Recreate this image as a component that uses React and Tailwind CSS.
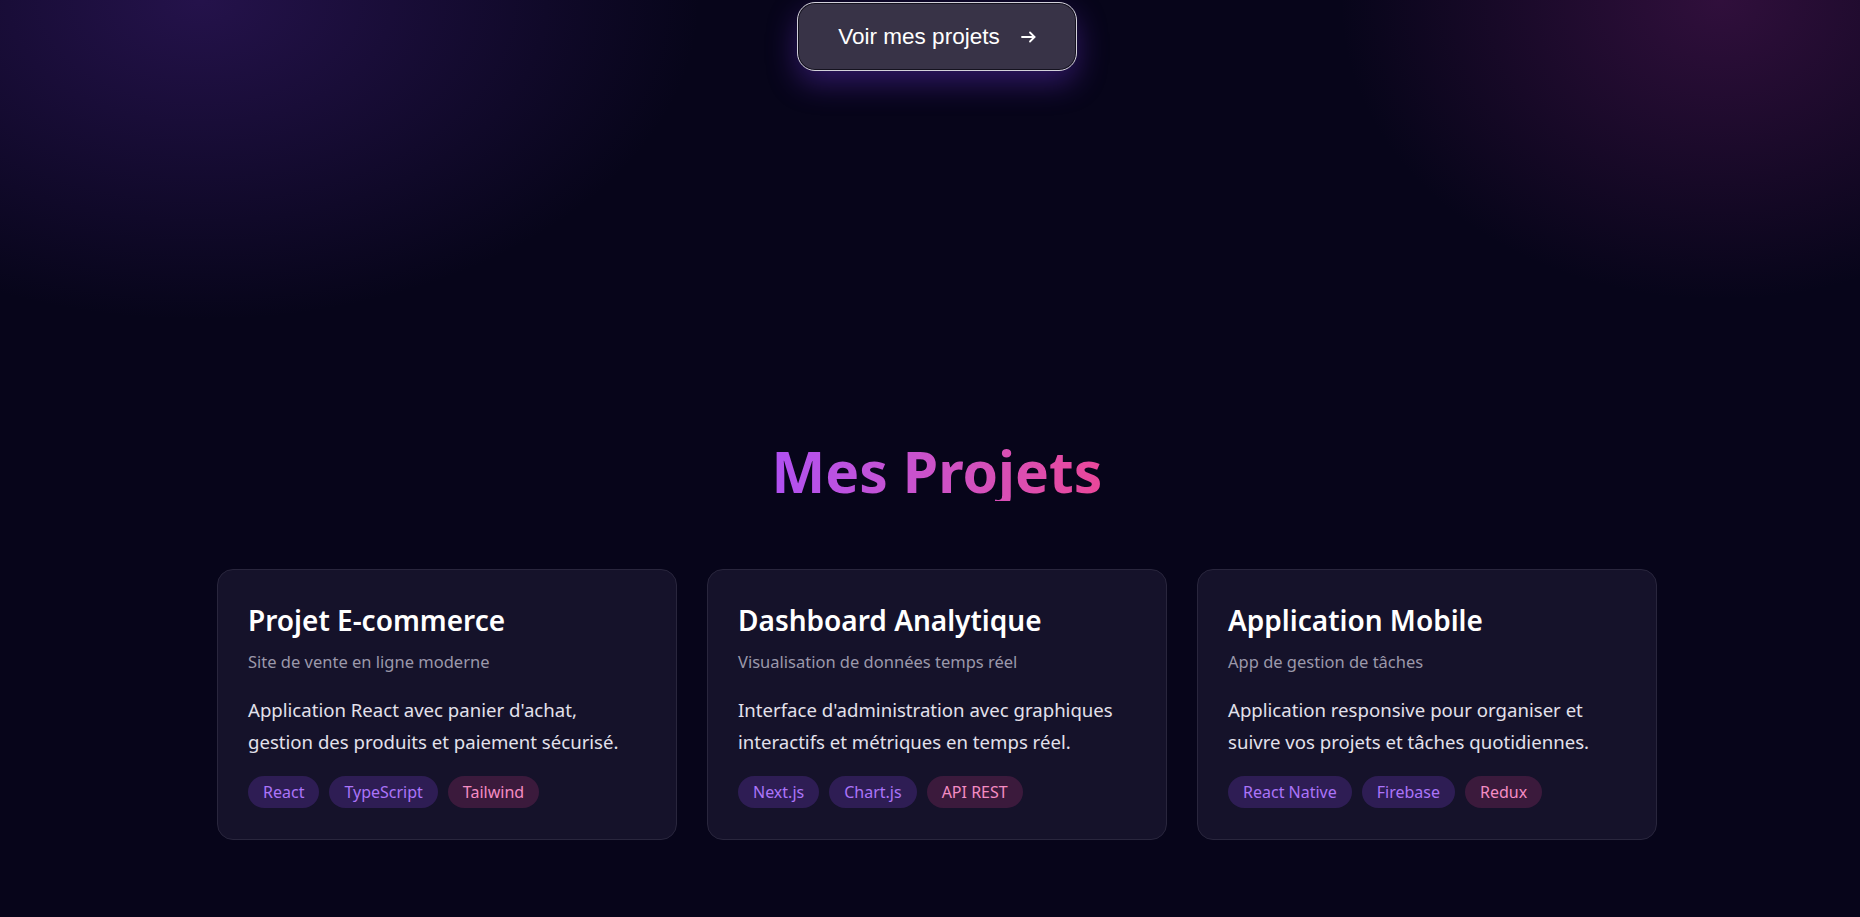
import React from 'react';

const projects = [
  {
    title: 'Projet E-commerce',
    subtitle: 'Site de vente en ligne moderne',
    description: "Application React avec panier d'achat, gestion des produits et paiement sécurisé.",
    tags: ['React', 'TypeScript', 'Tailwind'],
  },
  {
    title: 'Dashboard Analytique',
    subtitle: 'Visualisation de données temps réel',
    description: "Interface d'administration avec graphiques interactifs et métriques en temps réel.",
    tags: ['Next.js', 'Chart.js', 'API REST'],
  },
  {
    title: 'Application Mobile',
    subtitle: 'App de gestion de tâches',
    description: 'Application responsive pour organiser et suivre vos projets et tâches quotidiennes.',
    tags: ['React Native', 'Firebase', 'Redux'],
  },
];

// les deux premiers tags en violet, le dernier en rose
const tagStyles = [
  'bg-[#2e1d54] text-[#ab74f9]',
  'bg-[#2e1d54] text-[#ab74f9]',
  'bg-[#3b1a3c] text-[#f48cc3]',
];

function ProjectCard({ project }) {
  return (
    <div className="bg-[#15122a] border border-[#29263d] rounded-2xl pt-8 px-[30px] pb-[31px]">
      <h3 className="text-[28px] leading-9 font-semibold text-white">{project.title}</h3>
      <p className="mt-3 text-[16.5px] leading-6 text-[#9b98aa]">{project.subtitle}</p>
      <p className="mt-5 text-[18.6px] leading-8 text-[#e3e1ec] pr-4">{project.description}</p>
      <div className="mt-[18px] flex gap-[10px]">
        {project.tags.map((tag, i) => (
          <span key={tag} className={`h-8 px-[15px] rounded-full flex items-center text-base ${tagStyles[i]}`}>
            {tag}
          </span>
        ))}
      </div>
    </div>
  );
}

function Arrow() {
  return (
    <svg width="15" height="12" viewBox="0 0 15 12" fill="none" stroke="currentColor" strokeWidth="1.8" strokeLinecap="round" strokeLinejoin="round">
      <path d="M1 6h12.5" />
      <path d="M9 1.5 13.5 6 9 10.5" />
    </svg>
  );
}

export default function App() {
  return (
    <div
      className="min-h-screen pl-[14px] bg-[#07051a] bg-[radial-gradient(ellipse_500px_320px_at_200px_0px,rgba(72,34,134,0.45),transparent),radial-gradient(ellipse_380px_300px_at_1720px_0px,rgba(110,30,110,0.4),transparent)] font-['Noto_Sans',sans-serif] overflow-hidden"
    >
      {/* Hero (bas) */}
      <div className="flex justify-center pt-[2px]">
        <button className="w-[280px] h-[69px] rounded-[18px] bg-[#383347] border border-[#d2d0da] shadow-[inset_0_0_0_1px_#15131f,0_12px_30px_rgba(124,58,237,0.35)] flex items-center justify-center gap-[21px] text-white text-[22.5px] font-['Liberation_Sans',Arial,sans-serif]">
          <span>Voir mes projets</span>
          <span className="pt-[1px]"><Arrow /></span>
        </button>
      </div>

      {/* Projets */}
      <section className="mt-[370px] pb-16">
        <h2 className="text-[57px] leading-[60px] font-bold text-center bg-gradient-to-r from-[#b050f2] to-[#ea479a] bg-clip-text text-transparent w-fit mx-auto">
          Mes Projets
        </h2>
        <div className="mt-[68px] w-[1440px] mx-auto grid grid-cols-3 gap-[30px]">
          {projects.map(p => (
            <ProjectCard key={p.title} project={p} />
          ))}
        </div>
      </section>
    </div>
  );
}
